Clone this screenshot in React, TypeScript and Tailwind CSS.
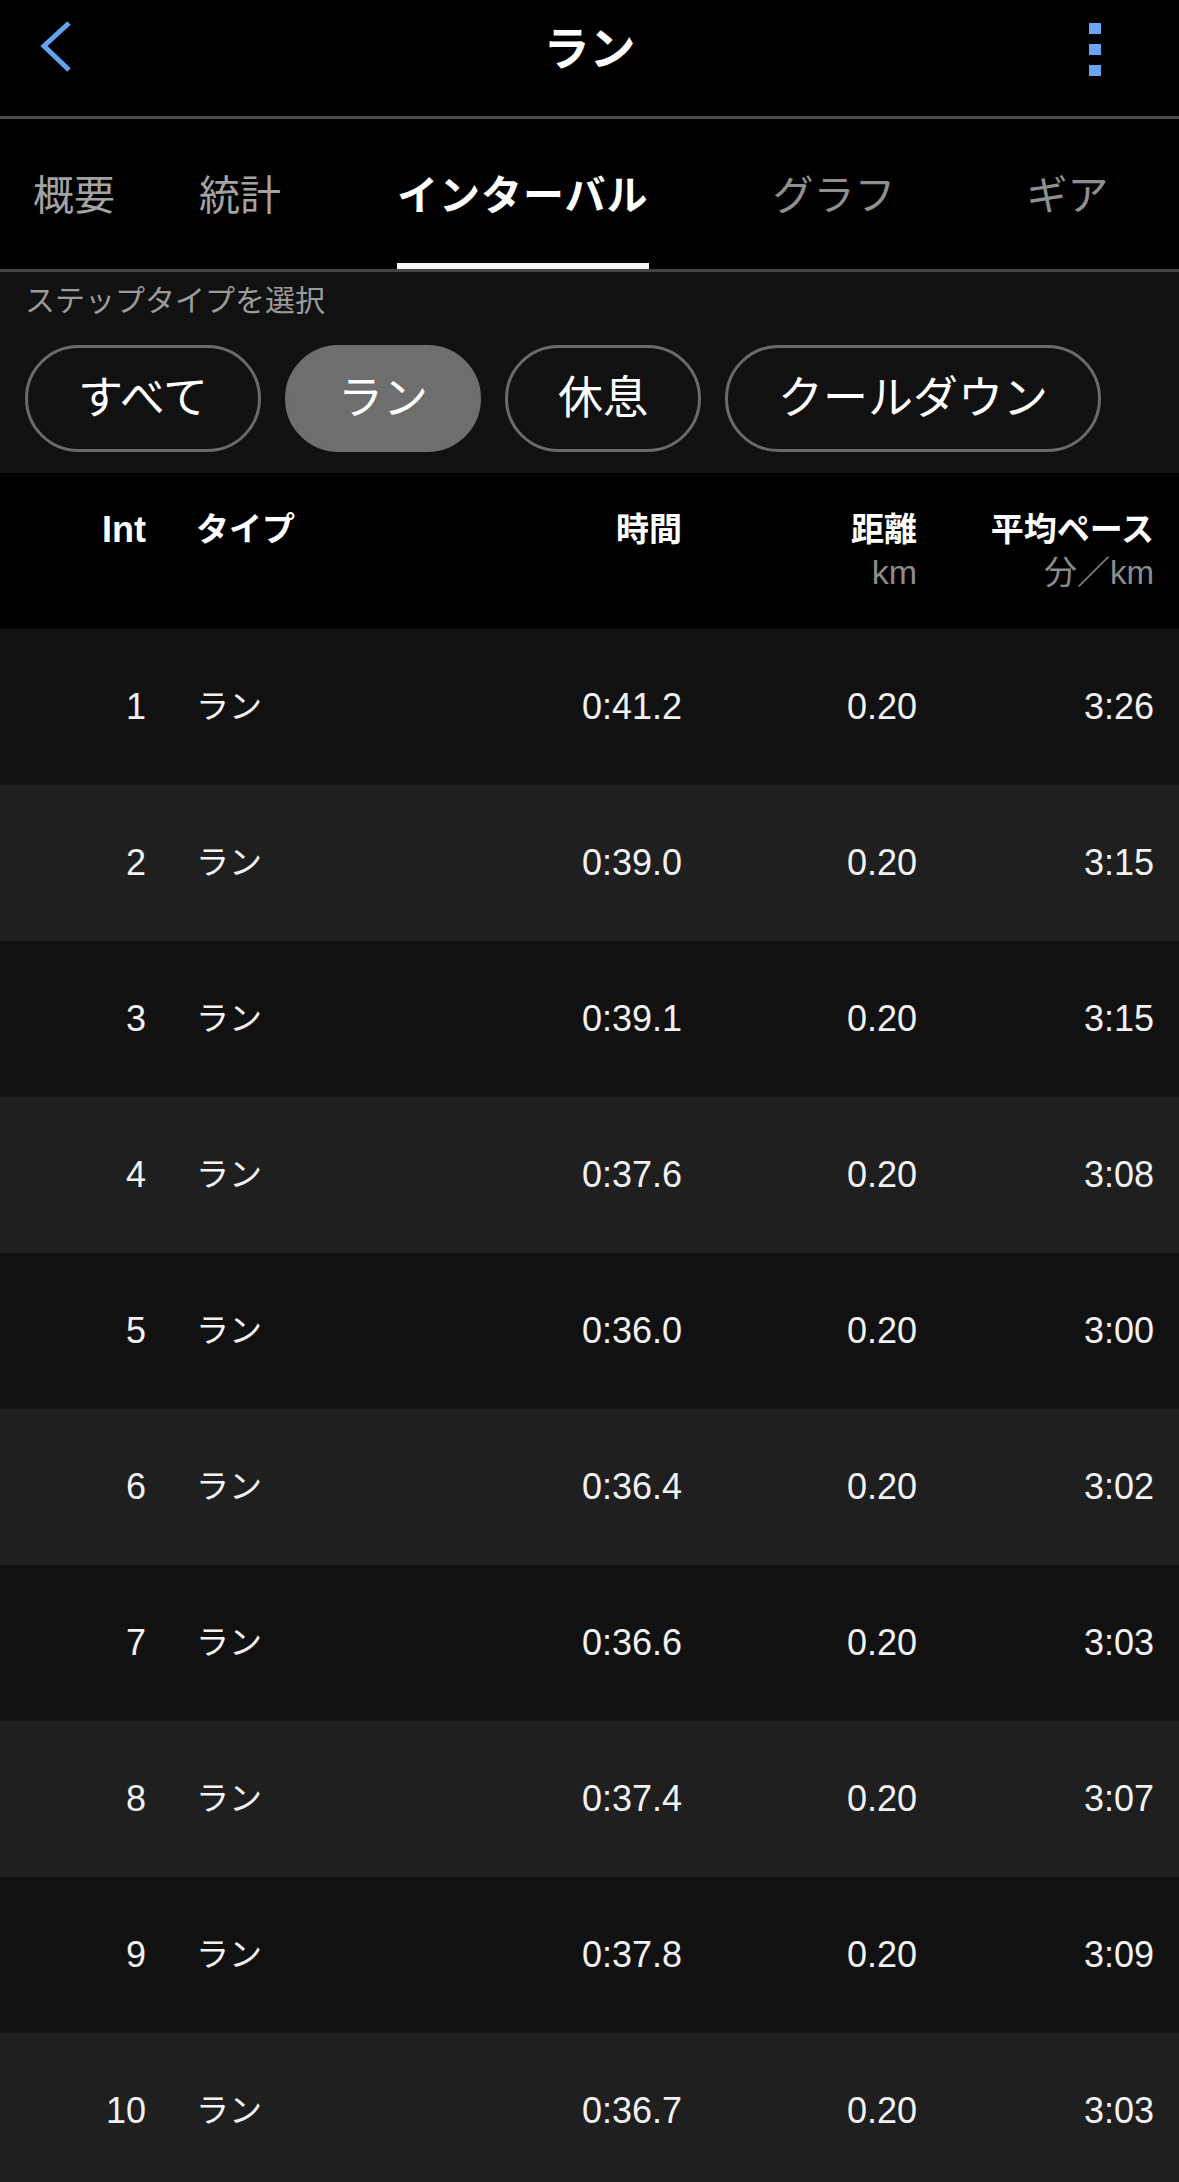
import React from 'react';

const font = "font-['Liberation_Sans','Noto_Sans_CJK_JP',sans-serif]";

const tabs = [
  { label: '概要', cls: 'ml-[33px] text-[#a3a3a3] border-transparent' },
  { label: '統計', cls: 'ml-[84px] text-[#a3a3a3] border-transparent' },
  { label: 'インターバル', cls: 'ml-[116px] text-white font-bold border-[#f5f5f5] tracking-[1px]' },
  { label: 'グラフ', cls: 'ml-[124px] text-[#8f8f8f] border-transparent' },
  { label: 'ギア', cls: 'ml-[131px] text-[#8f8f8f] border-transparent' },
];

const chips = [
  { label: 'すべて', active: false },
  { label: 'ラン', active: true },
  { label: '休息', active: false },
  { label: 'クールダウン', active: false },
];

const rows = [
  ['1', '0:41.2', '3:26'],
  ['2', '0:39.0', '3:15'],
  ['3', '0:39.1', '3:15'],
  ['4', '0:37.6', '3:08'],
  ['5', '0:36.0', '3:00'],
  ['6', '0:36.4', '3:02'],
  ['7', '0:36.6', '3:03'],
  ['8', '0:37.4', '3:07'],
  ['9', '0:37.8', '3:09'],
  ['10', '0:36.7', '3:03'],
];

function Header() {
  return (
    <header className="h-[119px] border-b-[3px] border-[#4a4a4a] flex items-center justify-between pb-[18px]">
      <div className="w-[200px] pl-[40px] flex items-center">
        <svg width="34" height="52" viewBox="0 0 34 52" className="mb-[4px]">
          <polyline points="29,2 4,25 29,49" fill="none" stroke="#64a2f2" strokeWidth="5" />
        </svg>
      </div>
      <h1 className="text-[46px] font-bold text-white leading-none">ラン</h1>
      <div className="w-[200px] pr-[78px] flex justify-end">
        <div className="flex flex-col gap-[10px]">
          <div className="w-[12px] h-[11px] bg-[#6aa5f5]" />
          <div className="w-[12px] h-[11px] bg-[#6aa5f5]" />
          <div className="w-[12px] h-[11px] bg-[#6aa5f5]" />
        </div>
      </div>
    </header>
  );
}

function Tabs() {
  return (
    <nav className="h-[153px] border-b-[3px] border-[#444444] flex">
      {tabs.map((t) => (
        <div
          key={t.label}
          className={`h-full flex items-center pt-[10px] border-b-[6px] text-[41px] leading-none whitespace-nowrap ${t.cls}`}
        >
          {t.label}
        </div>
      ))}
    </nav>
  );
}

function StepFilter() {
  return (
    <section className="bg-[#111111] pt-[9px] pb-[21px] px-[25px]">
      <div className="text-[30px] leading-[40px] text-[#9b9b9b]">ステップタイプを選択</div>
      <div className="mt-[24px] flex gap-[24px]">
        {chips.map((c) => (
          <div
            key={c.label}
            className={`h-[107px] px-[50px] rounded-full border-[3px] flex items-center text-[45px] text-white leading-none whitespace-nowrap ${
              c.active ? 'bg-[#6e6e6e] border-[#6e6e6e]' : 'border-[#6a6a6a]'
            }`}
          >
            {c.label}
          </div>
        ))}
      </div>
    </section>
  );
}

function IntervalTable() {
  return (
    <div>
      <div className="h-[156px] bg-black pt-[35px] pr-[25px] flex text-white font-bold">
        <div className="w-[146px] text-right text-[36px] leading-[43px]">Int</div>
        <div className="flex-1 pl-[50px] text-[33px] leading-[43px]">タイプ</div>
        <div className="w-[200px] text-right text-[33px] leading-[43px]">時間</div>
        <div className="w-[235px] text-right leading-[43px]">
          <div className="text-[33px]">距離</div>
          <div className="text-[34px] font-normal text-[#8c8c8c]">km</div>
        </div>
        <div className="w-[237px] text-right leading-[43px]">
          <div className="text-[33px]">平均ペース</div>
          <div className="text-[33px] font-normal text-[#8c8c8c]">分／km</div>
        </div>
      </div>
      {rows.map((r, i) => (
        <div
          key={r[0]}
          className={`h-[156px] pr-[25px] flex items-center text-[#f2f2f2] ${
            i % 2 === 0 ? 'bg-[#111111]' : 'bg-[#1f1f1f]'
          }`}
        >
          <div className="w-[146px] text-right text-[36px]">{r[0]}</div>
          <div className="flex-1 pl-[50px] text-[33px]">ラン</div>
          <div className="w-[200px] text-right text-[36px]">{r[1]}</div>
          <div className="w-[235px] text-right text-[36px]">0.20</div>
          <div className="w-[237px] text-right text-[36px]">{r[2]}</div>
        </div>
      ))}
    </div>
  );
}

export default function App() {
  return (
    <div className={`w-[1179px] min-h-screen bg-black overflow-hidden ${font}`}>
      <Header />
      <Tabs />
      <StepFilter />
      <IntervalTable />
    </div>
  );
}
